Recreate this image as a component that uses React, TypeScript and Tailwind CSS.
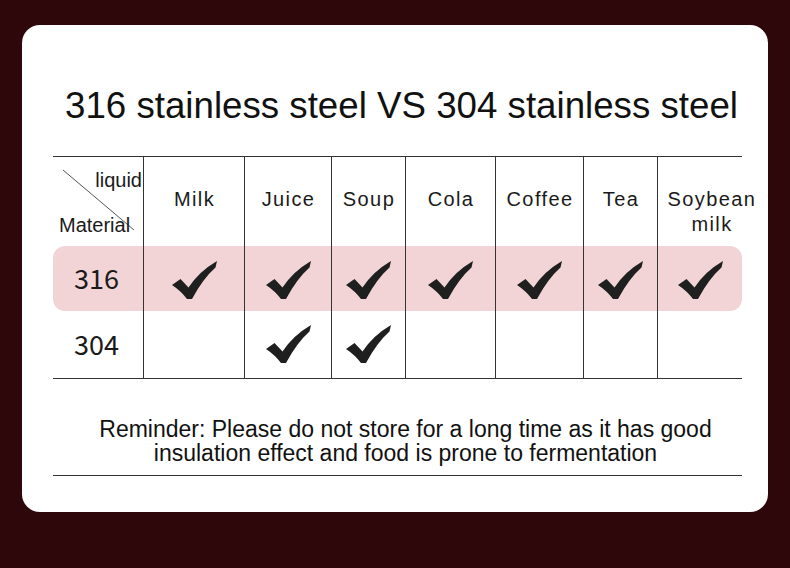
const cols = [
  { name: "Milk", w: "w-[101px]", a: true, b: false },
  { name: "Juice", w: "w-[87px]", a: true, b: true },
  { name: "Soup", w: "w-[74px]", a: true, b: true },
  { name: "Cola", w: "w-[90px]", a: true, b: false },
  { name: "Coffee", w: "w-[88px]", a: true, b: false },
  { name: "Tea", w: "w-[74px]", a: true, b: false },
  { name: "Soybean milk", w: "w-[85px]", a: true, b: false },
];

const Check = () => (
  <svg width="45" height="38" viewBox="0 0 45 38">
    <path
      d="M0 24 L8.5 18 L16.5 26.5 Q27 10.5 45 0 L43.5 6.5 Q31 17.5 20 38 L15 38 Q9 30 0 24 Z"
      fill="#1f1f1f"
    />
  </svg>
);

const numFont = { fontFamily: '"Noto Sans CJK SC", "Noto Sans", sans-serif' };

export default function App() {
  return (
    <div className="w-[790px] h-[568px] bg-[#2e070b] pt-[25px] pl-[22px]" style={{ fontFamily: '"Liberation Sans", Arial, sans-serif' }}>
      <div className="w-[746px] h-[487px] bg-white rounded-[18px] pt-[61px] pl-[31px]">
        <h1 className="w-[689px] pl-[8px] whitespace-nowrap text-center text-[36.7px] leading-[40px] text-[#111]">
          316 stainless steel VS 304 stainless steel
        </h1>

        <div className="mt-[30px] w-[689px] border-t border-b border-[#333] text-[#1a1a1a]">
          {/* header */}
          <div className="flex h-[89px]">
            <div className="relative w-[90px]">
              <svg className="absolute left-0 top-0" width="90" height="89">
                <line x1="10" y1="13" x2="81" y2="73" stroke="#555" strokeWidth="1" />
              </svg>
              <span className="absolute right-[1px] top-[11px] text-[20px] leading-[24px]">liquid</span>
              <span className="absolute left-[6px] top-[56px] text-[20px] leading-[24px]">Material</span>
            </div>
            {cols.map((c) => (
              <div key={c.name} className={`${c.w} border-l border-[#333] pt-[30px] text-[20px] leading-[25px] tracking-[1.4px]`}>
                {c.name === "Soybean milk" ? (
                  <div className="w-[108px] text-center">
                    Soybean
                    <br />
                    milk
                  </div>
                ) : (
                  <div className="text-center pl-[1px]">{c.name}</div>
                )}
              </div>
            ))}
          </div>

          {/* 316 */}
          <div className="flex h-[65px] bg-[#f2d4d6] rounded-[12px]">
            <div className="w-[90px] flex items-center justify-center pr-[3px] text-[27px]" style={numFont}>
              316
            </div>
            {cols.map((c) => (
              <div key={c.name} className={`${c.w} border-l border-[#333] flex items-center justify-center pt-[2px]`}>
                {c.a && <Check />}
              </div>
            ))}
          </div>

          {/* 304 */}
          <div className="flex h-[67px]">
            <div className="w-[90px] flex items-center justify-center pr-[3px] text-[27px]" style={numFont}>
              304
            </div>
            {cols.map((c) => (
              <div key={c.name} className={`${c.w} border-l border-[#333] flex items-center justify-center pb-[2px]`}>
                {c.b && <Check />}
              </div>
            ))}
          </div>
        </div>

        <p className="w-[689px] pl-[16px] mt-[38px] whitespace-nowrap text-center text-[23px] leading-[24px] text-[#111]">
          Reminder: Please do not store for a long time as it has good
          <br />
          insulation effect and food is prone to fermentation
        </p>
        <div className="w-[689px] mt-[10px] border-t border-[#333]" />
      </div>
    </div>
  );
}
